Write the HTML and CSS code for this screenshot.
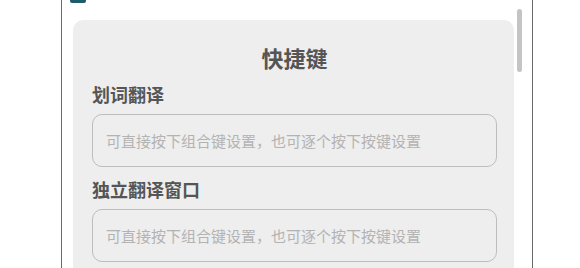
FILE: index.html
```html
<!DOCTYPE html>
<html lang="zh-CN">
<head>
<meta charset="utf-8">
<title>快捷键</title>
<link rel="stylesheet" href="styles.css">
</head>
<body>
<div class="frame">
  <div class="header"><span class="logo"></span></div>
  <div class="scrollbar"></div>
  <div class="panel">
    <h1 class="title">快捷键</h1>
    <div class="group">
      <div class="label">划词翻译</div>
      <input class="key-input" type="text" placeholder="可直接按下组合键设置，也可逐个按下按键设置">
    </div>
    <div class="group">
      <div class="label">独立翻译窗口</div>
      <input class="key-input" type="text" placeholder="可直接按下组合键设置，也可逐个按下按键设置">
    </div>
  </div>
</div>
</body>
</html>
```

FILE: styles.css
```css
html, body {
  margin: 0;
  padding: 0;
  background: #ffffff;
  height: 268px;
  overflow: hidden;
}
body {
  font-family: "Noto Sans CJK SC", "Noto Sans", sans-serif;
}
.frame {
  position: relative;
  margin-left: 61px;
  width: 470px;
  height: 268px;
  border-left: 1px solid #6a6a6a;
  border-right: 1px solid #6a6a6a;
  box-sizing: content-box;
  overflow: hidden;
}
.header {
  height: 20px;
  display: flex;
  align-items: flex-start;
  padding-left: 8px;
}
.logo {
  display: block;
  width: 16px;
  height: 3px;
  background: #1e5c6a;
  border-radius: 0 0 2px 2px;
}
.scrollbar {
  position: absolute;
  left: 455px;
  top: 9px;
  width: 5px;
  height: 63px;
  border-radius: 3px;
  background: #c4c4c4;
}
.panel {
  margin-left: 11px;
  width: 441px;
  background: #eeeeee;
  border-radius: 10px;
  padding: 22px 17px 20px 19px;
  box-sizing: border-box;
  height: 300px;
}
.title {
  margin: 0;
  font-size: 22px;
  line-height: 30px;
  font-weight: 700;
  color: #555555;
  text-align: center;
}
.group {
  margin-top: 10px;
}
.label {
  font-size: 18px;
  line-height: 24px;
  font-weight: 700;
  color: #555555;
  margin-bottom: 8px;
}
.key-input {
  display: block;
  width: 405px;
  height: 53px;
  box-sizing: border-box;
  border: 1px solid #bdbdbd;
  border-radius: 10px;
  background: #eeeeee;
  padding: 0 13px;
  font-family: "Noto Sans CJK SC", "Noto Sans", sans-serif;
  font-size: 15px;
  color: #555555;
  outline: none;
}
.key-input::placeholder {
  color: #b3b3b3;
}
```
